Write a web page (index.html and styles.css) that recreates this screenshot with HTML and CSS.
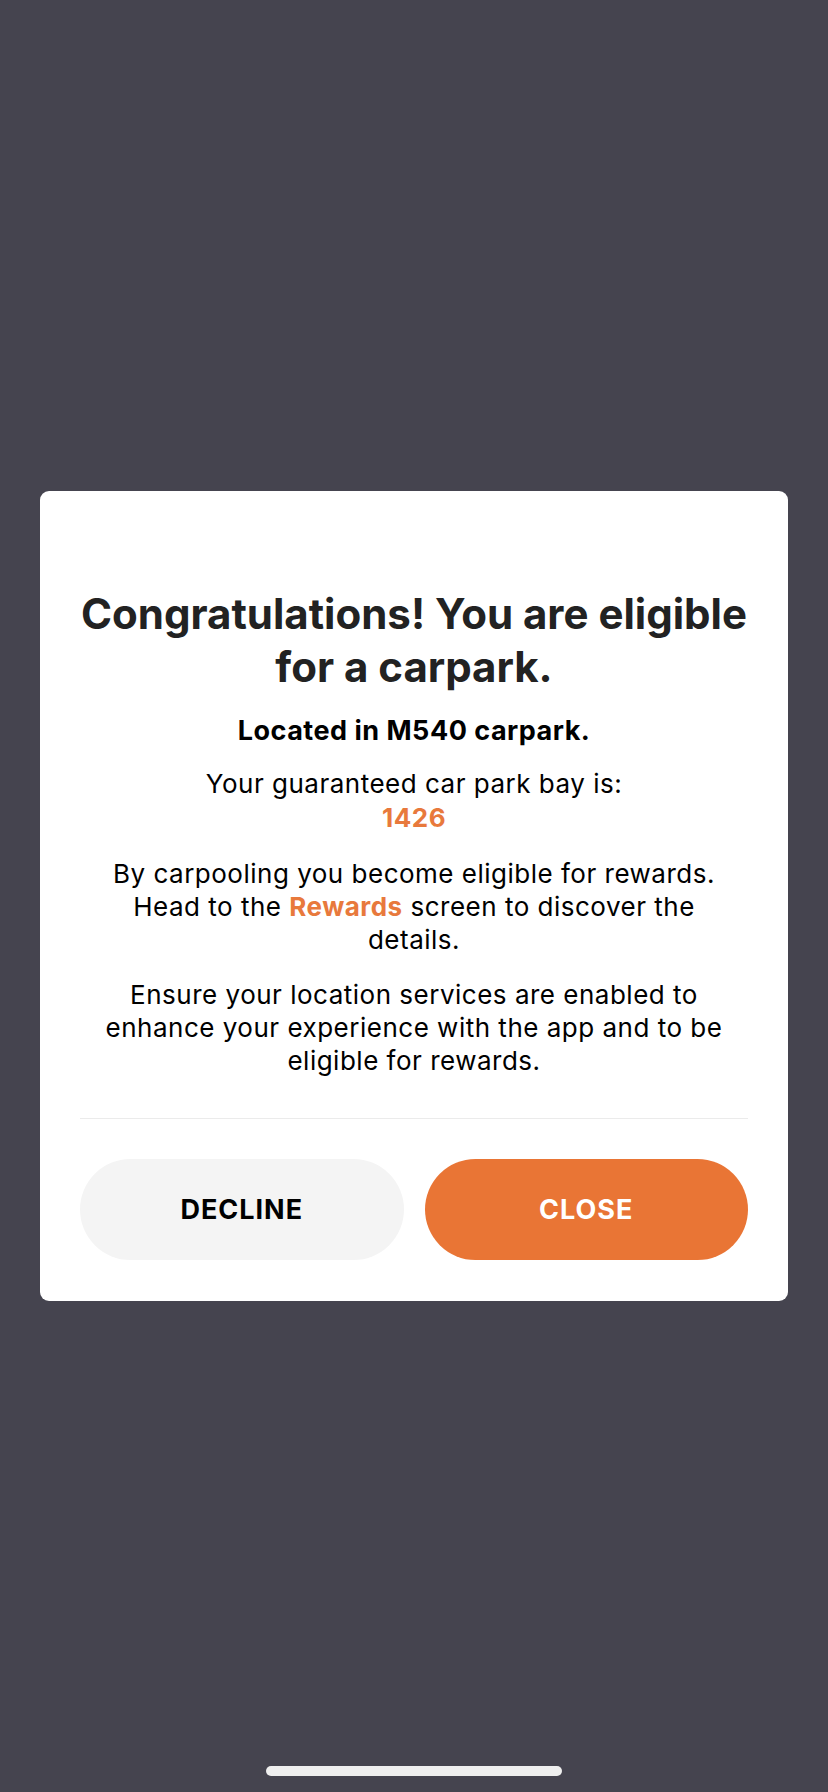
FILE: index.html
```html
<!DOCTYPE html>
<html lang="en">
<head>
<meta charset="utf-8">
<title>Carpark</title>
<link rel="stylesheet" href="styles.css">
</head>
<body>
<div class="screen">
  <div class="modal">
    <h1 class="title">Congratulations! You are eligible for a carpark.</h1>
    <p class="subtitle">Located in M540 carpark.</p>
    <div class="text bay">
      <div>Your guaranteed car park bay is:</div>
      <div class="accent">1426</div>
    </div>
    <p class="text">By carpooling you become eligible for rewards. Head to the <span class="accent">Rewards</span> screen to discover the details.</p>
    <p class="text">Ensure your location services are enabled to enhance your experience with the app and to be eligible for rewards.</p>
    <div class="divider"></div>
    <div class="actions">
      <button class="btn btn-secondary">DECLINE</button>
      <button class="btn btn-primary">CLOSE</button>
    </div>
  </div>
  <div class="home-indicator"></div>
</div>
</body>
</html>
```
FILE: styles.css
```css
* { box-sizing: border-box; }
html, body { margin: 0; padding: 0; }
body {
  background: #45444f;
  font-family: Inter, "Noto Sans", "Liberation Sans", sans-serif;
  color: #000;
}
.screen {
  position: relative;
  height: 1792px;
  display: flex;
  align-items: center;
  justify-content: center;
}
.modal {
  width: 748px;
  background: #fff;
  border-radius: 9px;
  padding: 96px 40px 41px;
  display: flex;
  flex-direction: column;
  align-items: center;
  text-align: center;
}
.title {
  margin: 0;
  font-size: 42px;
  line-height: 53px;
  font-weight: 700;
  color: #222;
  letter-spacing: 0;
}
.subtitle {
  margin: 21px 0 0;
  font-size: 27px;
  line-height: 33px;
  font-weight: 700;
  letter-spacing: 0.5px;
}
.text {
  margin: 22px 0 0;
  font-size: 26px;
  line-height: 33px;
  font-weight: 400;
  letter-spacing: 0.5px;
  padding: 0 8px;
}
.bay { margin-top: 20px; line-height: 34px; }
.accent { color: #e8793c; font-weight: 700; }
.divider {
  align-self: stretch;
  height: 1px;
  background: #ebebeb;
  margin-top: 41px;
}
.actions {
  align-self: stretch;
  display: flex;
  gap: 21px;
  margin-top: 40px;
}
.btn {
  flex: 1;
  height: 101px;
  border: none;
  border-radius: 51px;
  font-family: inherit;
  font-size: 27px;
  font-weight: 700;
  letter-spacing: 1px;
}
.btn-secondary { background: #f4f4f4; color: #000; }
.btn-primary { background: #e97535; color: #fff; }
.home-indicator {
  position: absolute;
  left: 266px;
  bottom: 16px;
  width: 296px;
  height: 10px;
  border-radius: 5px;
  background: #efefef;
}
```
